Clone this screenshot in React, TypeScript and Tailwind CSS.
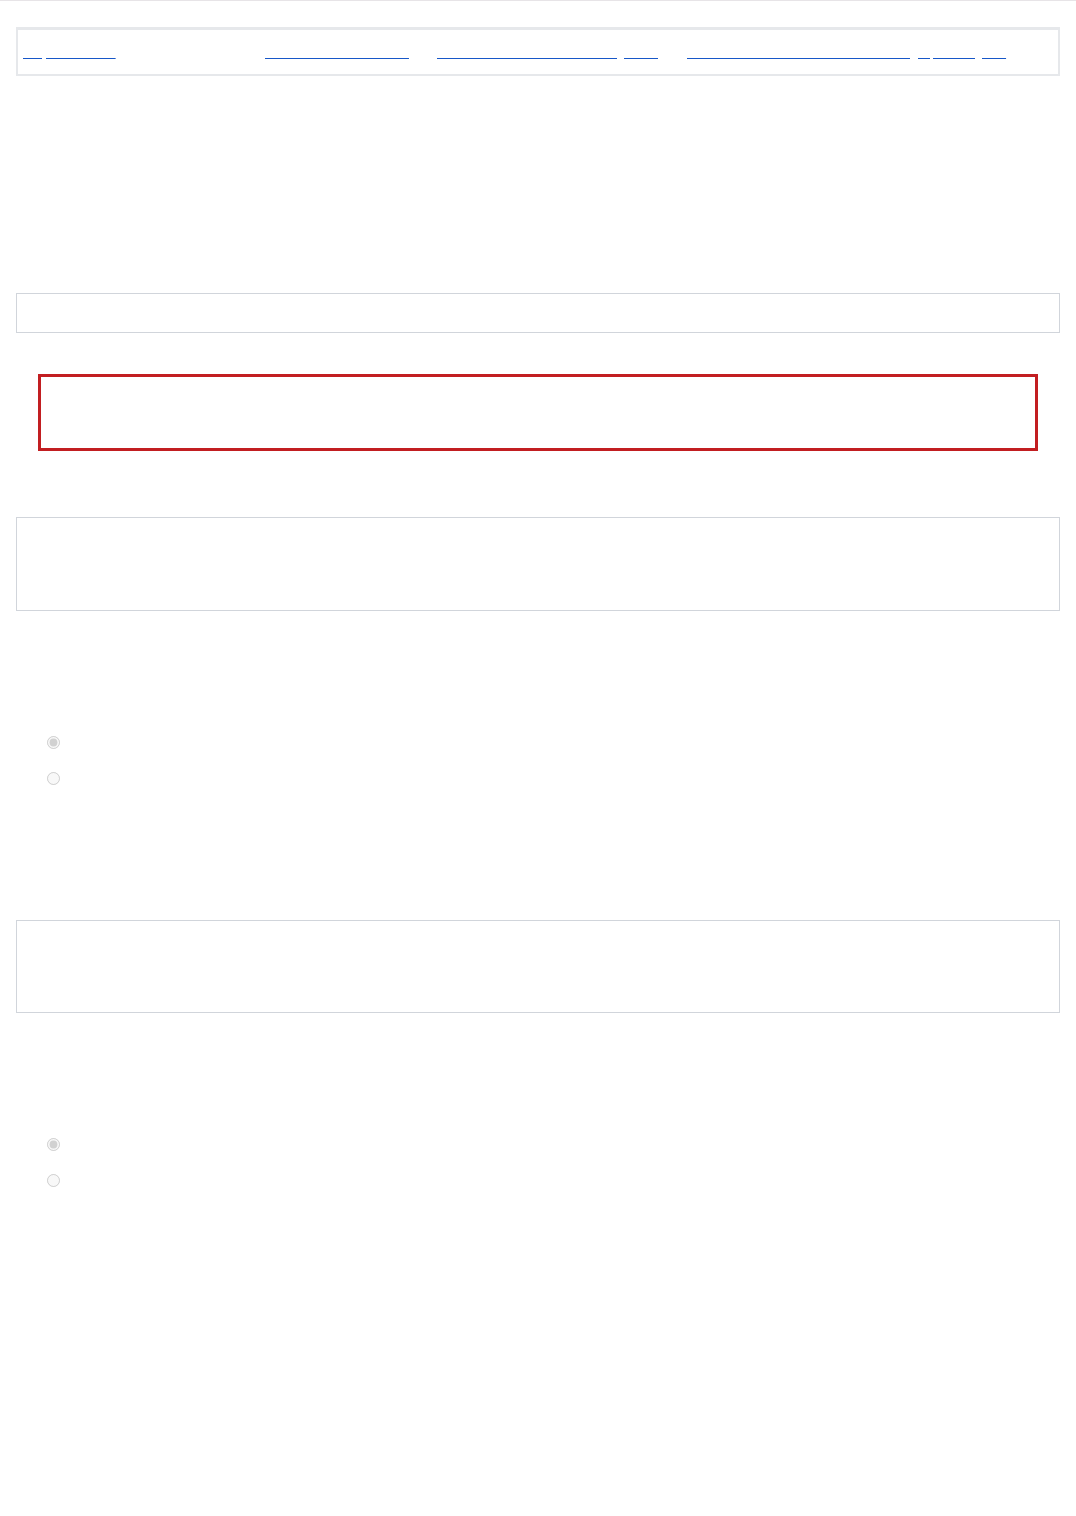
import React from "react"

const linkClass =
  "underline decoration-[#1757c8] decoration-1 whitespace-nowrap"

function RadioRow({ checked, label }: { checked?: boolean; label: string }) {
  return (
    <label className="flex h-9 items-center">
      <input type="radio" name={label} disabled defaultChecked={checked} className="m-0 ml-[31px]" />
      <span className="ml-2">{label}</span>
    </label>
  )
}

export default function App() {
  return (
    <div className="min-h-[1516px] bg-white font-['Liberation_Sans',Arial,sans-serif] text-sm text-transparent">
      <div className="h-px bg-[#e7e4e7]" />
      <div className="px-4">
        <nav className="mt-[26px] flex border-2 border-t-[3px] border-[#e6e8eb] px-[5px] py-3 leading-5">
          <div className="w-[242px]">
            <a href="#" className={linkClass}>Skip to content</a>
          </div>
          <div className="w-[172px]">
            <a href="#" className={linkClass}>Contact the webmaster</a>
          </div>
          <div className="w-[250px]">
            <a href="#" className={linkClass}>Notice of nondiscrimination rights in</a>
          </div>
          <div>
            <a href="#" className={linkClass}>Click here to read more about our big upcoming fair</a>
          </div>
        </nav>

        <div className="mt-[217px] h-10 border border-[#d1d5db] px-3 leading-[38px]">Search</div>

        <div className="mx-[22px] mt-[41px] h-[77px] border-[3px] border-[#c21e21] px-4 py-3">
          Please correct the errors below.
        </div>

        <div className="mt-[66px] h-[94px] border border-[#d1d5db] p-3">Question one</div>

        <div className="mt-[113px]">
          <RadioRow checked label="Yes" />
          <RadioRow label="No" />
        </div>

        <div className="mt-[124px] h-[93px] border border-[#d1d5db] p-3">Question two</div>

        <div className="mt-[113px]">
          <RadioRow checked label="Agree" />
          <RadioRow label="Disagree" />
        </div>
      </div>
    </div>
  )
}
